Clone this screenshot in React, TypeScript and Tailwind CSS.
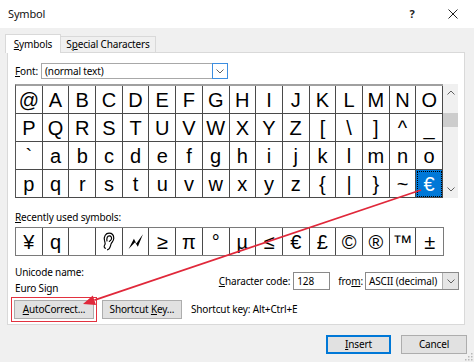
import React from "react";

const rows: string[][] = [
  ["@", "A", "B", "C", "D", "E", "F", "G", "H", "I", "J", "K", "L", "M", "N", "O"],
  ["P", "Q", "R", "S", "T", "U", "V", "W", "X", "Y", "Z", "[", "\\", "]", "^", "_"],
  ["`", "a", "b", "c", "d", "e", "f", "g", "h", "i", "j", "k", "l", "m", "n", "o"],
  ["p", "q", "r", "s", "t", "u", "v", "w", "x", "y", "z", "{", "|", "}", "~", "€"],
];

const Ear = () => (
  <svg width="13" height="19" viewBox="0 0 12 18" fill="none" stroke="#000" strokeWidth="1.1">
    <path d="M3.5 15.5 C1.8 15.5 1.5 13.5 2.4 12.3 C3.4 11 2.6 9.6 2.2 8 C1.4 4.2 3.4 1 6.5 1 C9.6 1 11 3.4 11 6 C11 8.6 9.4 9.4 8.6 11 C7.8 12.6 7.6 16.8 4.6 16.9" />
    <path d="M4.6 8.8 C4 6 4.8 3.6 6.8 3.6 C8.6 3.6 9.2 5.4 8.8 6.8 C8.4 8 7 8 6.6 9.4" />
  </svg>
);

const Bolt = () => (
  <svg width="17" height="17" viewBox="0 0 16 16">
    <polygon points="1.5,15 6.5,5.5 8.8,9.8 15,1.2 10.2,13 7.6,8.8" fill="#000" />
  </svg>
);

const recent: React.ReactNode[] = [
  "¥", "q", "", <Ear key="ear" />, <Bolt key="bolt" />, "≥", "π", "°", "µ", "≤", "€", "£", "©", "®", "™", "±",
];

const Chevron = ({ up = false }: { up?: boolean }) => (
  <svg width="8" height="5" viewBox="0 0 8 5" fill="none" stroke="#606060" strokeWidth="1">
    {up ? <path d="M0.5 4.5 L4 1 L7.5 4.5" /> : <path d="M0.5 0.5 L4 4 L7.5 0.5" />}
  </svg>
);

export default function App() {
  return (
    <div className="w-[474px] h-[362px] bg-[#f0f0f0] relative overflow-hidden font-['Noto_Sans',sans-serif] text-[10px] tracking-[-0.15px] text-black">
      {/* Title bar */}
      <div className="h-[28px] bg-white flex items-center pl-[8px]">
        <span className="text-[11px] text-[#111]">Symbol</span>
        <span className="ml-auto w-[10px] text-center text-[11px] font-bold text-[#222]">?</span>
        <span className="ml-[31px] mr-[16px] w-[10px] flex items-center justify-center">
          <svg width="10" height="10" viewBox="0 0 10 10" stroke="#222" strokeWidth="1">
            <path d="M0.5 0.5 L9.5 9.5 M9.5 0.5 L0.5 9.5" />
          </svg>
        </span>
      </div>

      {/* Tabs */}
      <div className="mt-[6px] h-[19px] -mb-px pl-[5px] flex relative z-10">
        <div className="w-[56px] h-[19px] bg-white border border-b-0 border-[#d9d9d9] flex items-center justify-center">
          <span><span className="underline">S</span>ymbols</span>
        </div>
        <div className="mt-[2px] w-[95px] h-[16px] bg-[#f0f0f0] border border-l-0 border-b-0 border-[#d9d9d9] flex items-center justify-center">
          <span>S<span className="underline">p</span>ecial Characters</span>
        </div>
      </div>

      {/* Panel */}
      <div className="ml-[7px] w-[458px] h-[273px] border border-[#d9d9d9] bg-white pl-[7px] pr-[5px] pt-[10px]">
        {/* Font row */}
        <div className="h-[16px] flex items-center">
          <span className="w-[26px]"><span className="underline">F</span>ont:</span>
          <div className="w-[187px] h-[16px] border border-[#a8a8a8] flex items-center">
            <span className="pl-[3px] flex-1">(normal text)</span>
            <div className="w-[16px] h-[16px] -mr-px border border-[#3d8ee0] bg-white flex items-center justify-center">
              <Chevron />
            </div>
          </div>
        </div>

        {/* Symbol grid */}
        <div className="mt-[5px] flex">
          <div className="w-[428px] h-[114px] border-t-2 border-t-[#a0a0a0] border-l border-l-[#555] grid grid-cols-16 font-['Liberation_Sans',Arial,sans-serif] text-[20px] tracking-normal leading-none">
            {rows.flat().map((ch, i) => {
              const sel = ch === "€";
              return (
                <div
                  key={i}
                  className={
                    "h-[28px] border-r border-b border-[#4a4a4a] flex items-center justify-center " +
                    (sel ? "bg-[#0078d7] text-white outline-1 outline-dotted outline-black -outline-offset-2" : "")
                  }
                >
                  {ch}
                </div>
              );
            })}
          </div>
          <div className="w-[15px] h-[114px] bg-[#f0f0f0] flex flex-col items-center">
            <div className="h-[17px] flex items-center justify-center">
              <Chevron up />
            </div>
            <div className="mt-[12px] w-[15px] h-[14px] bg-[#cdcdcd]" />
            <div className="mt-auto h-[17px] flex items-center justify-center">
              <Chevron />
            </div>
          </div>
        </div>

        {/* Recently used */}
        <div className="mt-[11px] h-[16px] leading-[16px]">
          <span className="underline">R</span>ecently used symbols:
        </div>
        <div className="mt-[2px] w-[429px] h-[29px] border border-[#7a7a7a] grid grid-cols-16 font-['Liberation_Sans',Arial,sans-serif] text-[20px] tracking-normal leading-none">
          {recent.map((ch, i) => (
            <div
              key={i}
              className={"h-[27px] flex items-center justify-center " + (i < 15 ? "border-r border-[#4a4a4a]" : "")}
            >
              {ch}
            </div>
          ))}
        </div>

        {/* Unicode name + character code */}
        <div className="mt-[8px] flex">
          <div className="flex flex-col">
            <div className="h-[16px] leading-[16px]">Unicode name:</div>
            <div className="h-[17px] leading-[17px]">Euro Sign</div>
          </div>
          <div className="ml-auto mt-[8px] h-[18px] flex items-center">
            <span><span className="underline">C</span>haracter code:</span>
            <div className="ml-[3px] w-[37px] h-[18px] border border-[#8a8a8a] flex items-center pl-[3px]">128</div>
            <span className="ml-[8px]">fro<span className="underline">m</span>:</span>
            <div className="ml-[2px] w-[94px] h-[18px] border border-[#8a8a8a] flex items-center">
              <span className="pl-[3px] flex-1">ASCII (decimal)</span>
              <div className="w-[16px] h-full bg-[#e5e5e5] border-l border-[#b0b0b0] flex items-center justify-center">
                <Chevron />
              </div>
            </div>
          </div>
        </div>

        {/* Buttons in panel */}
        <div className="mt-[3px] flex items-center">
          <div className="-ml-px w-[80px] h-[19px] bg-[#e1e1e1] border border-[#adadad] flex items-center justify-center outline-1 outline-[#e2323f] outline-offset-2">
            <span><span className="underline">A</span>utoCorrect...</span>
          </div>
          <div className="ml-[8px] w-[80px] h-[19px] bg-[#e1e1e1] border border-[#adadad] flex items-center justify-center">
            <span>Shortcut <span className="underline">K</span>ey...</span>
          </div>
          <span className="ml-[9px]">Shortcut key: Alt+Ctrl+E</span>
        </div>
      </div>

      {/* Dialog buttons */}
      <div className="mt-[10px] flex justify-end pr-[7px]">
        <div className="w-[65px] h-[19px] bg-[#e1e1e1] border-2 border-[#0078d7] flex items-center justify-center">
          <span><span className="underline">I</span>nsert</span>
        </div>
        <div className="ml-[10px] w-[66px] h-[19px] bg-[#e1e1e1] border border-[#adadad] flex items-center justify-center">
          Cancel
        </div>
      </div>

      {/* Resize grip */}
      <svg className="absolute right-[1px] bottom-[1px]" width="10" height="10" viewBox="0 0 10 10" fill="#b8b8b8">
        <rect x="8" y="2" width="1.5" height="1.5" />
        <rect x="5" y="5" width="1.5" height="1.5" />
        <rect x="8" y="5" width="1.5" height="1.5" />
        <rect x="2" y="8" width="1.5" height="1.5" />
        <rect x="5" y="8" width="1.5" height="1.5" />
        <rect x="8" y="8" width="1.5" height="1.5" />
      </svg>

      {/* Red annotation arrow */}
      <svg className="absolute inset-0 pointer-events-none" width="474" height="362" viewBox="0 0 474 362">
        <line x1="421" y1="190" x2="94.4" y2="300.2" stroke="#e0283a" strokeWidth="1.8" />
        <polygon points="83,304 96,304.9 92.8,295.4" fill="#e0283a" />
      </svg>
    </div>
  );
}
